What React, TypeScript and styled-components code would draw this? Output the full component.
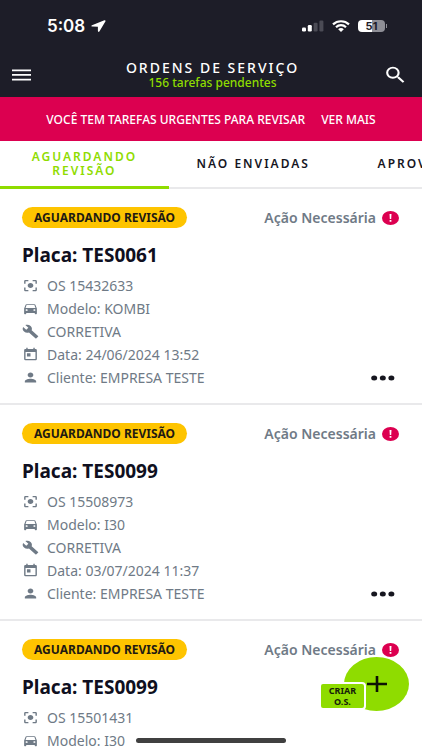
import React from "react";
import styled, { createGlobalStyle } from "styled-components";
import {
  MdBuild,
  MdCenterFocusStrong,
  MdDirectionsCar,
  MdPerson,
  MdSearch,
  MdToday,
} from "react-icons/md";

const GlobalStyle = createGlobalStyle`
  * { box-sizing: border-box; }
  body {
    margin: 0;
    background: #fff;
    font-family: "Noto Sans", "Open Sans", sans-serif;
  }
  button {
    border: 0;
    padding: 0;
    background: none;
    font: inherit;
    color: inherit;
    cursor: pointer;
  }
`;

const ink = "#1d1d28";
const lime = "#8fdc00";
const crimson = "#dc0050";
const slate = "#6f7a86";

const Screen = styled.div`
  display: flex;
  flex-direction: column;
  height: 100vh;
  overflow: hidden;
`;

const StatusBar = styled.div`
  display: flex;
  align-items: center;
  justify-content: space-between;
  flex: none;
  height: 52px;
  padding: 0 35px 0 47px;
  background: ${ink};
  color: #fff;
`;

const Clock = styled.div`
  display: flex;
  align-items: center;
  gap: 6px;
  font: 600 17px/20px Inter, sans-serif;
`;

const StatusIcons = styled.div`
  display: flex;
  align-items: center;
  gap: 8px;
`;

const Battery = styled.div`
  display: flex;
  align-items: center;
  gap: 1px;
`;

const BatteryBody = styled.span`
  width: 27px;
  height: 12px;
  border-radius: 4px;
  background: linear-gradient(90deg, #fff 51%, #8e8e96 51%);
  color: ${ink};
  font: 700 11px/12px Inter, sans-serif;
  text-align: center;
`;

const BatteryTip = styled.span`
  width: 1px;
  height: 4px;
  background: #8e8e96;
`;

const TopBar = styled.header`
  display: flex;
  align-items: center;
  justify-content: space-between;
  flex: none;
  height: 45px;
  padding: 0 14px 0 12px;
  background: ${ink};
  color: #fff;
`;

const IconButton = styled.button`
  display: flex;
  min-width: 30px;
  color: #fff;
`;

const SearchButton = styled(IconButton)`
  min-width: 0;
`;

const SearchIcon = styled(MdSearch)`
  width: 25px;
  height: 22px;
`;

const Heading = styled.div`
  text-align: center;
`;

const Title = styled.h1`
  margin: 0;
  font-size: 14px;
  line-height: 16px;
  font-weight: 500;
  letter-spacing: 2px;
`;

const Pending = styled.p`
  margin: 0;
  color: ${lime};
  font-size: 12px;
  line-height: 14px;
  font-weight: 500;
`;

const Banner = styled.div`
  display: flex;
  align-items: center;
  justify-content: center;
  gap: 16px;
  flex: none;
  height: 44px;
  background: ${crimson};
  color: #fff;
  font-size: 12px;
  font-weight: 500;
`;

const BannerLink = styled.a`
  color: #fff;
  text-decoration: none;
`;

const Tabs = styled.nav`
  display: flex;
  flex: none;
  height: 48px;
  overflow: hidden;
  box-shadow: inset 0 -2px #e9e9eb;
`;

const Tab = styled.button<{ $active?: boolean }>`
  flex: 0 0 40%;
  padding: 0 24px;
  border-bottom: 3px solid ${(p) => (p.$active ? lime : "transparent")};
  color: ${(p) => (p.$active ? lime : "#16161f")};
  font-size: 12px;
  line-height: 14px;
  font-weight: 600;
  letter-spacing: 2px;
  white-space: ${(p) => (p.$active ? "normal" : "nowrap")};
`;

const List = styled.main`
  flex: 1;
  min-height: 0;
  overflow-y: auto;
  scrollbar-width: none;
`;

const Card = styled.article`
  padding: 18px 23px 14px 22px;
  border-bottom: 2px solid #e9e9eb;
`;

const CardTop = styled.div`
  display: flex;
  align-items: center;
  justify-content: space-between;
`;

const Pill = styled.span`
  padding: 0 12px;
  border-radius: 11px;
  background: #fec400;
  color: #1f1a12;
  font-size: 12px;
  line-height: 21px;
  font-weight: 700;
`;

const Action = styled.span`
  display: flex;
  align-items: center;
  gap: 6px;
  color: ${slate};
  font-size: 14px;
  line-height: 20px;
  font-weight: 600;
`;

const Plate = styled.h2`
  margin: 15px 0 6px;
  color: #0f0f20;
  font-size: 19px;
  line-height: 25px;
  font-weight: 700;
`;

const CardBottom = styled.div`
  display: flex;
  align-items: flex-end;
  justify-content: space-between;
`;

const Details = styled.ul`
  margin: 0;
  padding: 0;
  list-style: none;
`;

const Detail = styled.li`
  display: flex;
  align-items: center;
  gap: 8px;
  height: 23px;
  color: ${slate};
  font-size: 14px;

  svg {
    width: 17px;
    height: 15px;
  }
`;

const More = styled.button`
  display: flex;
  margin: 0 4px 6px 0;
`;

const Fab = styled.button`
  position: fixed;
  right: 13px;
  bottom: 39px;
  display: flex;
  align-items: center;
  justify-content: center;
  width: 65px;
  height: 54px;
  border-radius: 50%;
  background: ${lime};
`;

const FabLabel = styled.span`
  position: absolute;
  right: 43px;
  bottom: 1px;
  width: 47px;
  padding: 1px 4px;
  border: 2px solid #fff;
  border-radius: 4px;
  background: ${lime};
  color: #16210a;
  font-size: 9px;
  line-height: 11px;
  font-weight: 700;
`;

const HomeIndicator = styled.div`
  position: fixed;
  left: 50%;
  bottom: 7px;
  width: 150px;
  height: 5px;
  margin-left: -75px;
  border-radius: 3px;
  background: #404040;
`;

const orders = [
  { plate: "TES0061", os: "15432633", model: "KOMBI", date: "24/06/2024 13:52" },
  { plate: "TES0099", os: "15508973", model: "I30", date: "03/07/2024 11:37" },
  { plate: "TES0099", os: "15501431", model: "I30", date: "03/07/2024 10:15" },
];

function AlertIcon() {
  return (
    <svg width="17" height="14" viewBox="0 0 17 14" aria-hidden="true">
      <ellipse cx="8.5" cy="7" rx="8.5" ry="7" fill={crimson} />
      <path d="M7.5 3h2l-.3 5H7.8zM7.6 9h1.8v1.7H7.6z" fill="#fff" />
    </svg>
  );
}

function OrderCard({ order }: { order: (typeof orders)[number] }) {
  return (
    <Card>
      <CardTop>
        <Pill>AGUARDANDO REVISÃO</Pill>
        <Action>
          Ação Necessária
          <AlertIcon />
        </Action>
      </CardTop>
      <Plate>Placa: {order.plate}</Plate>
      <CardBottom>
        <Details>
          <Detail><MdCenterFocusStrong preserveAspectRatio="none" />OS {order.os}</Detail>
          <Detail><MdDirectionsCar preserveAspectRatio="none" />Modelo: {order.model}</Detail>
          <Detail><MdBuild preserveAspectRatio="none" />CORRETIVA</Detail>
          <Detail><MdToday preserveAspectRatio="none" />Data: {order.date}</Detail>
          <Detail><MdPerson preserveAspectRatio="none" />Cliente: EMPRESA TESTE</Detail>
        </Details>
        <More aria-label="Mais opções">
          <svg width="24" height="10" viewBox="0 0 24 10" fill="#16161f">
            <ellipse cx="3.2" cy="5" rx="3" ry="2.5" />
            <ellipse cx="11.8" cy="5" rx="3" ry="2.5" />
            <ellipse cx="20.4" cy="5" rx="3" ry="2.5" />
          </svg>
        </More>
      </CardBottom>
    </Card>
  );
}

export default function App() {
  return (
    <Screen>
      <GlobalStyle />
      <StatusBar>
        <Clock>
          5:08
          <svg width="15" height="12" viewBox="0 0 15 12" aria-hidden="true">
            <path d="M13.4.3 1 5.3c-.9.4-.7 1.3.3 1.3l5.6.1v4.4c0 .9 1.1 1.1 1.6.2L14.5 1.3c.3-.7-.3-1.3-1.1-1z" fill="#fff" />
          </svg>
        </Clock>
        <StatusIcons>
          <svg width="22" height="12" viewBox="0 0 22 12" aria-hidden="true">
            <rect x="0" y="7.5" width="4" height="4" rx="1.2" fill="#fff" />
            <rect x="5.8" y="5" width="4" height="6.5" rx="1.2" fill="#fff" />
            <rect x="11.6" y="2.7" width="4" height="8.8" rx="1.2" fill="#4b4b55" />
            <rect x="17.4" y="0.5" width="4" height="11" rx="1.2" fill="#4b4b55" />
          </svg>
          <svg width="18" height="12" viewBox="0 0 18 12" fill="none" stroke="#fff" strokeWidth="2.2" aria-hidden="true">
            <path d="M1 4.4C5.4.2 12.6.2 17 4.4" />
            <path d="M4 7.2c2.8-2.7 7.2-2.7 10 0" />
            <path d="M6.2 9.2c1.6-1.5 4-1.5 5.6 0L9 12z" fill="#fff" stroke="none" />
          </svg>
          <Battery>
            <BatteryBody>51</BatteryBody>
            <BatteryTip />
          </Battery>
        </StatusIcons>
      </StatusBar>
      <TopBar>
        <IconButton aria-label="Menu">
          <svg width="19" height="12" viewBox="0 0 19 12" fill="#fff">
            <path d="M0 .5h19v1.7H0zM0 5.1h19v1.7H0zM0 9.7h19v1.7H0z" />
          </svg>
        </IconButton>
        <Heading>
          <Title>ORDENS DE SERVIÇO</Title>
          <Pending>156 tarefas pendentes</Pending>
        </Heading>
        <SearchButton aria-label="Buscar">
          <SearchIcon preserveAspectRatio="none" />
        </SearchButton>
      </TopBar>
      <Banner>
        <span>VOCÊ TEM TAREFAS URGENTES PARA REVISAR</span>
        <BannerLink href="#urgentes">VER MAIS</BannerLink>
      </Banner>
      <Tabs>
        <Tab $active>AGUARDANDO REVISÃO</Tab>
        <Tab>NÃO ENVIADAS</Tab>
        <Tab>APROVADAS</Tab>
      </Tabs>
      <List>
        {orders.map((order) => (
          <OrderCard key={order.os} order={order} />
        ))}
      </List>
      <Fab>
        <svg width="20" height="16" viewBox="0 0 20 16" fill="#0d1204" aria-hidden="true">
          <path d="M8.7 0h2.6v6.8H20v2.4h-8.7V16H8.7V9.2H0V6.8h8.7z" />
        </svg>
        <FabLabel>CRIAR O.S.</FabLabel>
      </Fab>
      <HomeIndicator />
    </Screen>
  );
}
